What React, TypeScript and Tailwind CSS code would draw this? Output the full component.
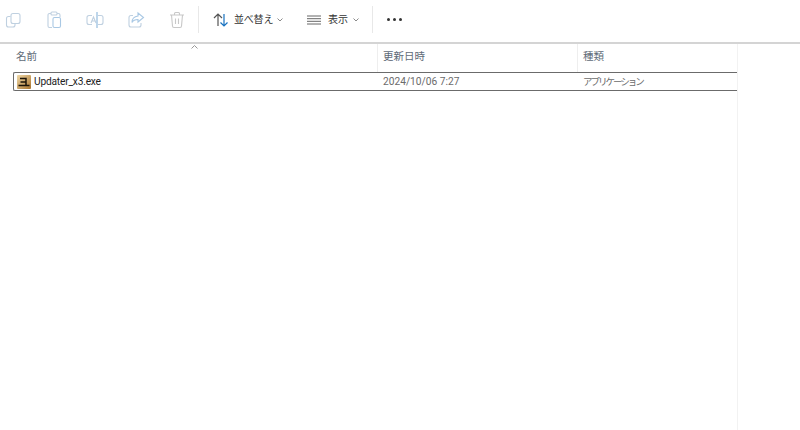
import { FC, ReactNode } from "react"

const FONT = "font-['Roboto','Noto_Sans_CJK_JP',sans-serif]"

const ToolIcon: FC<{ children: ReactNode; stroke?: string }> = ({ children, stroke = "#bfd0e0" }) => (
  <div className="w-4 flex justify-center">
    <svg width="18" height="18" viewBox="0 0 18 18" fill="none" stroke={stroke} strokeWidth="1.1" className="shrink-0">
      {children}
    </svg>
  </div>
)

const Chevron = ({ className }: { className: string }) => (
  <svg width="6" height="4" viewBox="0 0 6 4" fill="none" stroke="#8a8a8a" className={`shrink-0 ${className}`}>
    <path d="M0.5 0.500L3 3l2.500-2.500" />
  </svg>
)

const App = () => {
  return (
    <div className={`w-[800px] h-[430px] bg-white overflow-hidden flex flex-col ${FONT}`}>
      {/* toolbar */}
      <div className="h-[42px] shrink-0 flex items-center pb-[3px] pl-[5px]">
        <div className="flex gap-[25px]">
          <ToolIcon>
            <rect x="7" y="2.500" width="9" height="10" rx="2" />
            <path d="M6.500 5.500H4.500a2 2 0 0 0-2 2V14a2 2 0 0 0 2 2H9a2 2 0 0 0 2-2v-1.500" />
          </ToolIcon>
          <ToolIcon>
            <path d="M12 2.500h1.500A1.500 1.500 0 0 1 15 4v2M7 16.500H4.500A1.500 1.500 0 0 1 3 15V4a1.500 1.500 0 0 1 1.500-1.500H6" />
            <rect x="6" y="1" width="6" height="3" rx="1" />
            <rect x="8" y="6.500" width="7.500" height="10" rx="1.500" stroke="#a9c8e4" />
          </ToolIcon>
          <ToolIcon>
            <path d="M6 4.500H3a2 2 0 0 0-2 2v5a2 2 0 0 0 2 2h3M12 4.500h3a2 2 0 0 1 2 2v5a2 2 0 0 1-2 2h-3" />
            <path d="M5 12l2.500-6 2.500 6M5.800 10h3.400" />
            <path d="M11 1v16" stroke="#a9c8e4" strokeWidth="1.500" />
          </ToolIcon>
          <ToolIcon>
            <path d="M6 4.500H4a2 2 0 0 0-2 2V14a2 2 0 0 0 2 2h8a2 2 0 0 0 2-2v-2" />
            <path d="M11 2l5.500 4.500L11 11V8.500c-3 0-5 1-6 3 0-4 2-6 6-6.500z" stroke="#a9c8e4" />
          </ToolIcon>
          <ToolIcon stroke="#c8c8c8">
            <path d="M2 4h14M6.500 4V2.500a1 1 0 0 1 1-1h3a1 1 0 0 1 1 1V4" />
            <path d="M3.500 4l1 11a1.500 1.500 0 0 0 1.500 1.500h6a1.500 1.500 0 0 0 1.500-1.500l1-11" />
            <path d="M7.500 7.500v5.500M10.500 7.500v5.500" />
          </ToolIcon>
        </div>
        <div className="w-px h-[27px] bg-[#e8e8e8] ml-[13px]" />
        <svg width="16" height="14" viewBox="0 0 16 14" fill="none" strokeWidth="1.200" className="ml-[14px] shrink-0">
          <path d="M5 13V1M1 5l4-4 4 4" stroke="#555555" />
          <path d="M11 1v12M7.500 9.500l3.500 3.500 3.500-3.500" stroke="#1a73c0" />
        </svg>
        <span className="ml-[5px] w-[38px] text-[10px] tracking-[-0.2px] leading-none text-[#333333] whitespace-nowrap">並べ替え</span>
        <Chevron className="ml-[5px]" />
        <svg width="14" height="10" viewBox="0 0 14 10" fill="none" stroke="#666666" className="ml-[24px] shrink-0">
          <path d="M0 1h14M0 3.700h14M0 6.300h14M0 9h14" />
        </svg>
        <span className="ml-[7px] w-[20px] text-[10px] leading-none text-[#333333] whitespace-nowrap">表示</span>
        <Chevron className="ml-[5px]" />
        <div className="w-px h-[27px] bg-[#e8e8e8] ml-[13px]" />
        <div className="ml-[14px] flex gap-[3px]">
          <div className="w-[3px] h-[3px] rounded-full bg-[#333333]" />
          <div className="w-[3px] h-[3px] rounded-full bg-[#333333]" />
          <div className="w-[3px] h-[3px] rounded-full bg-[#333333]" />
        </div>
      </div>
      <div className="h-[2px] shrink-0 bg-[#d4d4d4]" />

      {/* file list */}
      <div className="w-[738px] flex-1 border-r border-[#f2f2f2]">
        <div className="relative h-[28px] flex text-[10.5px] text-[#5f6b78]">
          <svg width="7" height="4" viewBox="0 0 7 4" fill="none" stroke="#999999" className="absolute left-[191px] top-[1px]">
            <path d="M0.500 3.500L3.500 0.500l3 3" />
          </svg>
          <div className="w-[378px] pl-[16px] pt-[5px] border-r border-[#eeeeee]">名前</div>
          <div className="w-[200px] pl-[5px] pt-[5px] border-r border-[#eeeeee]">更新日時</div>
          <div className="flex-1 pl-[5px] pt-[5px]">種類</div>
        </div>
        <div className="ml-[13px] h-[19px] flex items-center border border-r-0 border-[#6b6b6b] rounded-l-[2px] pt-[1px]">
          <div className="w-[365px] flex items-center pl-[3px]">
            <svg width="14" height="14" viewBox="0 0 14 14" className="shrink-0">
              <defs>
                <linearGradient id="appIcon" x1="0" y1="0" x2="1" y2="1">
                  <stop offset="0" stopColor="#f0d9a8" />
                  <stop offset="1" stopColor="#a8742e" />
                </linearGradient>
              </defs>
              <rect width="14" height="14" rx="1" fill="url(#appIcon)" />
              <path d="M3 3.500H9V7H3.500M9 7V10.500M1.500 10.500H12.500" stroke="#1c1408" strokeWidth="1.500" fill="none" />
            </svg>
            <span className="ml-[3px] text-[10.200px] tracking-[-0.2px] text-[#222222]">Updater_x3.exe</span>
          </div>
          <div className="w-[200px] pl-[4px] text-[10.200px] text-[#6b6b6b]">2024/10/06 7:27</div>
          <div className="flex-1 pl-[4px] text-[#6b6b6b] text-[9.500px] tracking-[-2px]">アプリケーション</div>
        </div>
      </div>
    </div>
  )
}

export default App
